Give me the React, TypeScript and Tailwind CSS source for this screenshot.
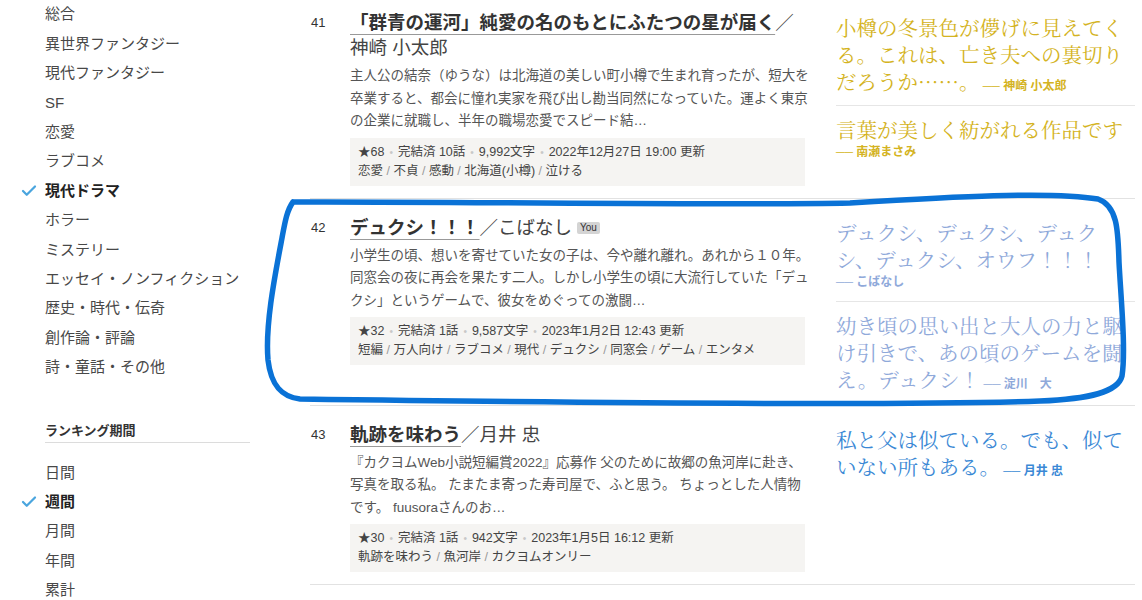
import { Check } from 'lucide-react';

const genres = [
  '総合',
  '異世界ファンタジー',
  '現代ファンタジー',
  'SF',
  '恋愛',
  'ラブコメ',
  '現代ドラマ',
  'ホラー',
  'ミステリー',
  'エッセイ・ノンフィクション',
  '歴史・時代・伝奇',
  '創作論・評論',
  '詩・童話・その他',
];

const periods = ['日間', '週間', '月間', '年間', '累計'];

type Quote = { text: string; by: string };

type Entry = {
  rank: number;
  title: string;
  author: string;
  you?: boolean;
  desc: string[];
  stars: number;
  episodes: string;
  chars: string;
  updated: string;
  tags: string[];
  quoteColor: string;
  quotes: Quote[];
};

const entries: Entry[] = [
  {
    rank: 41,
    title: '「群青の運河」純愛の名のもとにふたつの星が届く',
    author: '神崎 小太郎',
    desc: [
      '主人公の結奈（ゆうな）は北海道の美しい町小樽で生まれ育ったが、短大を',
      '卒業すると、都会に憧れ実家を飛び出し勘当同然になっていた。運よく東京',
      'の企業に就職し、半年の職場恋愛でスピード結…',
    ],
    stars: 68,
    episodes: '完結済 10話',
    chars: '9,992文字',
    updated: '2022年12月27日 19:00 更新',
    tags: ['恋愛', '不貞', '感動', '北海道(小樽)', '泣ける'],
    quoteColor: 'text-[#d4b322]',
    quotes: [
      { text: '小樽の冬景色が儚げに見えてくる。これは、亡き夫への裏切りだろうか……。', by: '神崎 小太郎' },
      { text: '言葉が美しく紡がれる作品です', by: '南瀬まさみ' },
    ],
  },
  {
    rank: 42,
    title: 'デュクシ！！！',
    author: 'こばなし',
    you: true,
    desc: [
      '小学生の頃、想いを寄せていた女の子は、今や離れ離れ。あれから１０年。',
      '同窓会の夜に再会を果たす二人。しかし小学生の頃に大流行していた「デュ',
      'クシ」というゲームで、彼女をめぐっての激闘…',
    ],
    stars: 32,
    episodes: '完結済 1話',
    chars: '9,587文字',
    updated: '2023年1月2日 12:43 更新',
    tags: ['短編', '万人向け', 'ラブコメ', '現代', 'デュクシ', '同窓会', 'ゲーム', 'エンタメ'],
    quoteColor: 'text-[#8fa9da]',
    quotes: [
      { text: 'デュクシ、デュクシ、デュクシ、デュクシ、オウフ！！！', by: 'こばなし' },
      { text: '幼き頃の思い出と大人の力と駆け引きで、あの頃のゲームを闘え。デュクシ！', by: '淀川　大' },
    ],
  },
  {
    rank: 43,
    title: '軌跡を味わう',
    author: '月井 忠',
    desc: [
      '『カクヨムWeb小説短編賞2022』応募作 父のために故郷の魚河岸に赴き、',
      '写真を取る私。 たまたま寄った寿司屋で、ふと思う。 ちょっとした人情物',
      'です。 fuusoraさんのお…',
    ],
    stars: 30,
    episodes: '完結済 1話',
    chars: '942文字',
    updated: '2023年1月5日 16:12 更新',
    tags: ['軌跡を味わう', '魚河岸', 'カクヨムオンリー'],
    quoteColor: 'text-[#3a88d5]',
    quotes: [{ text: '私と父は似ている。でも、似ていない所もある。', by: '月井 忠' }],
  },
];

function SideItem({ label, active }: { label: string; active?: boolean }) {
  return (
    <li className="flex items-center h-[29.4px] pl-[20px]">
      <span className="w-[25px] flex items-center">
        {active && <Check className="w-[18px] h-[18px] text-[#4aa5de]" strokeWidth={3} />}
      </span>
      <span className={active ? 'font-bold text-[#222]' : 'text-[#484848]'}>{label}</span>
    </li>
  );
}

function Dot() {
  return <span className="mx-[5px] text-[#c8c8c8] text-[10px]">•</span>;
}

function Row({ e }: { e: Entry }) {
  return (
    <div className="flex pt-4 pb-[12px] border-b border-[#e2e2e2]">
      <div className="w-[40px] pl-[1px] text-[13px] leading-[25px] text-[#333]">{e.rank}</div>

      <div className="w-[455px]">
        <h3 className="text-[18.5px] leading-[25px] text-[#444]">
          <span className="font-bold text-[#333] underline decoration-[#999] decoration-1 underline-offset-[5px]">
            {e.title}
          </span>
          <span>／{e.author}</span>
          {e.you && (
            <span className="ml-[5px] align-[3px] inline-block bg-[#d4d4d4] text-[#333] text-[10px] leading-[12px] px-[3px] rounded-[2px]">
              You
            </span>
          )}
        </h3>
        <p className="mt-[5px] text-[13.5px] leading-[22.5px] text-[#555]">
          {e.desc.map((l, i) => (
            <span key={i} className="block whitespace-nowrap">
              {l}
            </span>
          ))}
        </p>
        <div className="mt-[5px] bg-[#f5f4f2] px-2 py-[5px] text-[12.5px] leading-[19px] text-[#444]">
          <div>
            ★{e.stars}
            <Dot />
            {e.episodes}
            <Dot />
            {e.chars}
            <Dot />
            {e.updated}
          </div>
          <div>
            {e.tags.map((t, i) => (
              <span key={t}>
                {i > 0 && <span className="text-[#999]"> / </span>}
                {t}
              </span>
            ))}
          </div>
        </div>
      </div>

      <div className="w-[31px]" />

      <div className="w-[299px]">
        {e.quotes.map((q, i) => (
          <p
            key={i}
            className={`text-[12px] leading-[18px] ${e.quoteColor} ${
              i === 0 ? 'pt-1' : 'pt-[10px] border-t border-[#e6e6e6]'
            } ${i === e.quotes.length - 1 ? '' : 'pb-[10px]'}`}
          >
            <span className="text-[20.5px] leading-[27px] [font-family:'Noto_Serif_CJK_JP','Noto_Sans_CJK_JP',serif]">
              {q.text}
            </span>{' '}
            <span className="font-bold whitespace-nowrap">── {q.by}</span>
          </p>
        ))}
      </div>
    </div>
  );
}

export default function App() {
  return (
    <div className="relative w-[1142px] h-[600px] overflow-hidden bg-white flex [font-family:'Liberation_Sans','Noto_Sans_CJK_JP',sans-serif]">
      <aside className="w-[310px] shrink-0 text-[15px]">
        <ul>
          {genres.map((g) => (
            <SideItem key={g} label={g} active={g === '現代ドラマ'} />
          ))}
        </ul>
        <div className="ml-[45px] w-[205px] mt-[39px] pb-[1px] border-b border-[#dcdcdc] text-[13px] leading-[20px] font-bold text-[#333]">
          ランキング期間
        </div>
        <ul className="mt-[15px]">
          {periods.map((p) => (
            <SideItem key={p} label={p} active={p === '週間'} />
          ))}
        </ul>
      </aside>

      <main className="w-[825px] -mt-[6px]">
        {entries.map((e) => (
          <Row key={e.rank} e={e} />
        ))}
      </main>

      {/* hand-drawn annotation */}
      <svg className="absolute inset-0 pointer-events-none" width="1142" height="600" viewBox="0 0 1142 600">
        <path
          d="M 293 202 C 420 201, 700 206, 850 203 C 950 197, 1050 191, 1098 199 C 1118 206, 1118 232, 1119 262 C 1121 300, 1126 350, 1122 376 C 1118 392, 1090 399, 1040 401 C 900 406, 520 402, 300 399 C 282 397, 271 386, 268 360 C 265 325, 275 275, 282 238 C 285 222, 287 210, 293 202"
          fill="none"
          stroke="#0a72d6"
          strokeWidth="5.5"
          strokeLinecap="round"
          strokeLinejoin="round"
        />
      </svg>
    </div>
  );
}
